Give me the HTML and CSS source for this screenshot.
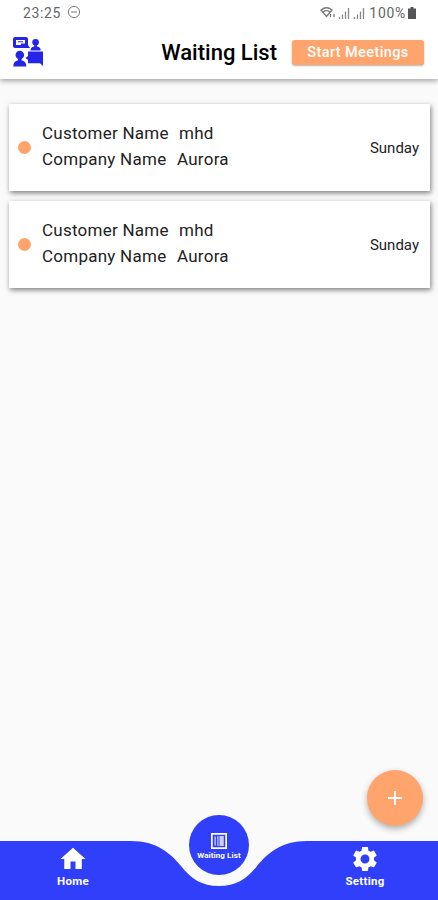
FILE: index.html
```html
<!DOCTYPE html>
<html lang="en">
<head>
  <meta charset="UTF-8" />
  <title>Waiting List</title>
  <link rel="stylesheet" href="styles.css">
</head>
<body>

  <header class="header">
    <div class="status-bar">
      <span class="time">23:25</span>
      <svg class="dnd" viewBox="0 0 14 14"><circle cx="7" cy="7" r="5.6"/><path d="M4 7h6"/></svg>
      <div class="status-right">
        <svg class="wifi" viewBox="0 0 16 13">
          <path d="M1 4Q6.500 -.5 12 4L6.500 10.500zM3.200 6Q6.500 3.400 9.800 6"/>
          <path d="M10.500 8v3M14 8v3"/>
        </svg>
        <svg class="signal" viewBox="0 0 12 12"><path d="M1.500 10v2M4.500 7.500V12M7.500 4.500V12M10.500 1V12"/></svg>
        <svg class="signal" viewBox="0 0 12 12"><path d="M1.500 10v2M4.500 7.500V12M7.500 4.500V12M10.500 1V12"/></svg>
        <span class="percent">100%</span>
        <svg class="battery" viewBox="0 0 8 12"><path d="M2.500 0h3v1.500H8V12H0V1.500h2.500z"/></svg>
      </div>
    </div>
    <div class="title-bar">
      <svg class="logo" viewBox="0 0 30 30">
        <path fill-rule="evenodd" d="M2 0h11q2 0 2 2v6l2 3H2q-2 0-2-2V2q0-2 2-2zM3 3v5h5V6.500h4V3z"/>
        <path d="M5 4.300h5v1H5z"/>
        <circle cx="22.600" cy="5.200" r="3.300"/>
        <path d="M21.300 7h2.600v3h-2.600z"/>
        <path d="M17.500 13.500q0-3.600 3.500-4.100h3.200q3.500.5 3.500 4.100z"/>
        <circle cx="6.800" cy="18" r="4.300"/>
        <path d="M5 21h3.600v4H5z"/>
        <path d="M.3 29.500q0-5.200 4-6h5q4 .8 4 6z"/>
        <path d="M15 14.500h15V29l-3-2.800H15V23l-2.500-2 2.500-2z"/>
      </svg>
      <h1>Waiting List</h1>
      <button class="start">Start Meetings</button>
    </div>
  </header>

  <main class="list">
    <div class="card">
      <span class="dot"></span>
      <div class="info">
        <p><span class="label">Customer Name</span><span>mhd</span></p>
        <p><span class="label company">Company Name</span><span>Aurora</span></p>
      </div>
      <span class="day">Sunday</span>
    </div>
    <div class="card">
      <span class="dot"></span>
      <div class="info">
        <p><span class="label">Customer Name</span><span>mhd</span></p>
        <p><span class="label company">Company Name</span><span>Aurora</span></p>
      </div>
      <span class="day">Sunday</span>
    </div>
  </main>

  <button class="fab" aria-label="Add">
    <svg viewBox="0 0 14 14"><path d="M7 0v14M0 7h14"/></svg>
  </button>

  <nav class="nav">
    <svg class="nav-shape" viewBox="0 0 438 59">
      <path d="M0 0H131C157 0 170 12 181 25C191 38 202 45 219 45C236 45 247 38 257 25C268 12 281 0 307 0H438V59H0z"/>
    </svg>
    <a class="nav-item">
      <svg viewBox="0 0 24 24"><path d="M10 20v-6h4v6h5v-8h3L12 3 2 12h3v8z"/></svg>
      <span>Home</span>
    </a>
    <a class="nav-active">
      <svg viewBox="0 0 16 16"><path fill-rule="evenodd" d="M0 0h16v16H0zM1.700 1.700v12.600h12.600V1.700z"/><path d="M3.500 3.500h1.300v9H3.500zM6.300 3h1.200v10H6.300zM8.500 3h4.300v10H8.500z" opacity=".75"/></svg>
      <span>Waiting List</span>
    </a>
    <a class="nav-item">
      <svg viewBox="0 0 24 24"><path d="M19.14 12.94c.04-.3.06-.61.06-.94 0-.32-.02-.64-.07-.94l2.03-1.58c.18-.14.23-.41.12-.61l-1.92-3.32c-.12-.22-.37-.29-.59-.22l-2.39.96c-.5-.38-1.03-.7-1.62-.94l-.36-2.54c-.04-.24-.24-.41-.48-.41h-3.84c-.24 0-.43.17-.47.41l-.36 2.54c-.59.24-1.13.57-1.62.94l-2.39-.96c-.22-.08-.47 0-.59.22L2.74 8.87c-.12.21-.08.47.12.61l2.03 1.58c-.05.3-.09.63-.09.94s.02.64.07.94l-2.03 1.58c-.18.14-.23.41-.12.61l1.92 3.32c.12.22.37.29.59.22l2.39-.96c.5.38 1.03.7 1.62.94l.36 2.54c.05.24.24.41.48.41h3.84c.24 0 .44-.17.47-.41l.36-2.54c.59-.24 1.13-.56 1.62-.94l2.39.96c.22.08.47 0 .59-.22l1.92-3.32c.12-.22.07-.47-.12-.61l-2.01-1.58zM12 15.6c-1.98 0-3.6-1.62-3.6-3.6s1.62-3.6 3.6-3.6 3.6 1.62 3.6 3.6-1.62 3.6-3.6 3.6z"/></svg>
      <span>Setting</span>
    </a>
  </nav>

</body>
</html>
```
FILE: styles.css
```css
* {
  box-sizing: border-box;
}

body {
  margin: 0;
  height: 100vh;
  display: flex;
  flex-direction: column;
  background-color: #fafafa;
  font-family: Roboto, sans-serif;
  color: #222;
  overflow: hidden;
}

svg {
  display: block;
  flex-shrink: 0;
}

h1, p {
  margin: 0;
}

button {
  border: none;
  padding: 0;
  font-family: inherit;
  color: #fff;
  background-color: #ffa46c;
}

.header {
  height: 79px;
  background-color: #fff;
  box-shadow: 0 2px 5px rgba(0, 0, 0, 0.35);
}

.status-bar {
  height: 25px;
  padding: 0 22px 0 23px;
  display: flex;
  align-items: center;
  color: #666;
  font-size: 14px;
}

.time {
  letter-spacing: 0.6px;
}

.dnd {
  width: 14px;
  height: 14px;
  margin-left: 6px;
  margin-bottom: 2px;
  fill: none;
  stroke: #777;
}

.status-right {
  margin-left: auto;
  display: flex;
  align-items: center;
}

.wifi {
  width: 16px;
  height: 13px;
  margin-right: 2px;
  fill: none;
  stroke: #777;
  stroke-width: 1.3;
}

.signal {
  width: 12px;
  height: 12px;
  margin-right: 3px;
  stroke: #888;
  stroke-width: 1.3;
}

.percent {
  margin: 0 2px 0 1px;
  letter-spacing: 0.7px;
}

.battery {
  width: 8px;
  height: 12px;
  fill: #555;
}

.title-bar {
  height: 54px;
  padding: 0 14px 0 13px;
  display: flex;
  align-items: center;
}

.logo {
  width: 30px;
  height: 30px;
  fill: #2525e8;
}

h1 {
  margin-left: auto;
  font-size: 22px;
  font-weight: 500;
  color: #000;
}

.start {
  width: 132px;
  height: 25px;
  margin-left: 15px;
  border-radius: 3px;
  font-size: 14.5px;
  font-weight: 500;
  letter-spacing: 0.4px;
  box-shadow: 0 1px 2px rgba(0, 0, 0, 0.3);
}

.list {
  flex: 1;
  padding: 25px 8px 0 9px;
  display: flex;
  flex-direction: column;
  gap: 10px;
}

.card {
  height: 87px;
  padding: 0 11px 0 9px;
  display: flex;
  align-items: center;
  background-color: #fff;
  box-shadow: 1px 2px 5px rgba(0, 0, 0, 0.5);
}

.dot {
  width: 13px;
  height: 13px;
  border-radius: 50%;
  background-color: #ffa46c;
}

.info {
  margin-left: 11px;
  margin-bottom: 3px;
  font-size: 17px;
  line-height: 26px;
  letter-spacing: 0.25px;
}

.label {
  display: inline-block;
  width: 137px;
}

.company {
  width: 135px;
}

.day {
  margin-left: auto;
  font-size: 15px;
}

.fab {
  position: absolute;
  right: 15px;
  bottom: 74px;
  width: 56px;
  height: 56px;
  border-radius: 50%;
  display: flex;
  align-items: center;
  justify-content: center;
  box-shadow: 0 3px 6px rgba(0, 0, 0, 0.3);
}

.fab svg {
  width: 14px;
  height: 14px;
  stroke: #fff;
  stroke-width: 1.8;
}

.nav {
  position: relative;
  height: 59px;
  display: flex;
  color: #fff;
}

.nav svg {
  fill: #fff;
}

.nav .nav-shape {
  position: absolute;
  left: 0;
  top: 0;
  width: 100%;
  height: 59px;
  fill: #303ffa;
}

.nav-item {
  position: relative;
  flex: 1;
  padding-top: 3px;
  display: flex;
  flex-direction: column;
  align-items: center;
  font-size: 11.5px;
  font-weight: 700;
  line-height: 14px;
  letter-spacing: 0.3px;
}

.nav-item svg {
  width: 30px;
  height: 30px;
}

.nav-active {
  position: relative;
  width: 60px;
  height: 60px;
  margin: -26px 43px 0;
  padding-top: 18px;
  border-radius: 50%;
  display: flex;
  flex-direction: column;
  align-items: center;
  background-color: #303ffa;
  font-size: 8px;
  font-weight: 700;
  line-height: 10px;
  letter-spacing: 0.1px;
  white-space: nowrap;
}

.nav-active svg {
  width: 16px;
  height: 16px;
  margin-bottom: 2px;
}
```
